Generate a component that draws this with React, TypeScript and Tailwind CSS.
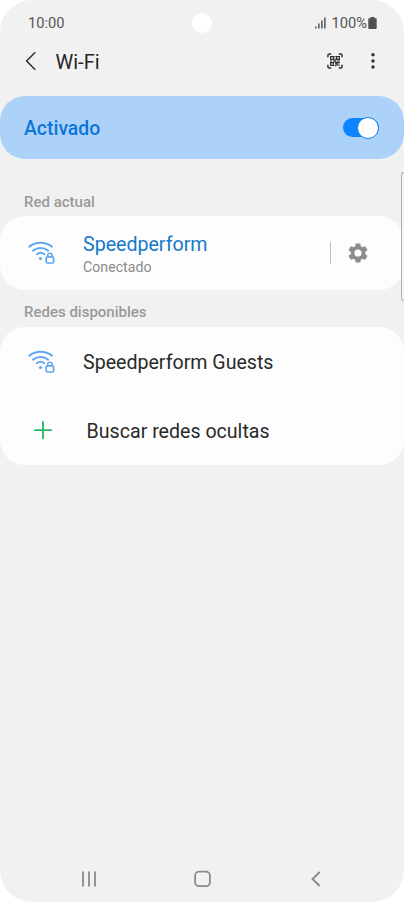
import React from 'react';

const WifiLock = () => (
  <svg className="w-7 h-6 shrink-0" viewBox="0 0 28 24" fill="none" stroke="#62a8f0" strokeWidth="2" strokeLinecap="round">
    <path d="M2.3 5.6C9 .4 18.2 .4 24.9 5.6" />
    <path d="M6.1 9.6C10.4 6.1 16.8 6.1 21.1 9.6" />
    <path d="M9.8 13.2C12 11.5 15.2 11.5 17.4 13.2" />
    <circle cx="13.5" cy="17.5" r="1.6" fill="#62a8f0" stroke="none" />
    <rect x="19.2" y="15.8" width="7.4" height="6.2" rx="1.2" strokeWidth="1.7" />
    <path d="M20.7 15.6v-1.2a2.2 2.2 0 0 1 4.4 0v1.2" strokeWidth="1.6" />
  </svg>
);

const ScanCode = () => (
  <svg className="w-4 h-4" viewBox="0 0 16 16" fill="none" stroke="#303030">
    <path d="M.9 4.2V2.6Q.9 1.1 2.4 1.1h1.8M11.8 1.1h1.8q1.5 0 1.5 1.5v1.6M15.1 11.8v1.6q0 1.5-1.5 1.5h-1.8M4.2 14.9H2.4Q.9 14.9.9 13.4v-1.6" strokeWidth="1.5" />
    <path d="M3.6 3.6h3v2.8h-3zM9.6 3.6h2.8v2.8H9.6zM3.6 9.6h2.8v2.8H3.6z" strokeWidth="1.2" />
    <path d="M8.1 3v1.3M8.1 5.4v2.2M3 8h2.2M6.2 8.1h3M10.2 8h2.8M7.8 9.6h2.6M11.2 9.5H13M8 11h4.2M7.8 12.6h1.4M10.2 8.6v4.2M11.6 12.5h1.2" strokeWidth="1.2" />
  </svg>
);

const Gear = () => (
  <svg className="w-6 h-6" viewBox="0 0 24 24" fill="#8c8c8c">
    <path d="M19.14 12.94c.04-.3.06-.61.06-.94 0-.32-.02-.64-.07-.94l2.03-1.58a.49.49 0 0 0 .12-.61l-1.92-3.32a.488.488 0 0 0-.59-.22l-2.39.96c-.5-.38-1.03-.7-1.62-.94l-.36-2.54a.484.484 0 0 0-.48-.41h-3.84c-.24 0-.43.17-.47.41l-.36 2.54c-.59.24-1.13.57-1.62.94l-2.39-.96c-.22-.08-.47 0-.59.22L2.74 8.87c-.12.21-.08.47.12.61l2.03 1.58c-.05.3-.09.63-.09.94s.02.64.07.94l-2.03 1.58a.49.49 0 0 0-.12.61l1.92 3.32c.12.22.37.29.59.22l2.39-.96c.5.38 1.03.7 1.62.94l.36 2.54c.05.24.24.41.48.41h3.84c.24 0 .44-.17.47-.41l.36-2.54c.59-.24 1.13-.56 1.62-.94l2.39.96c.22.08.47 0 .59-.22l1.92-3.32c.12-.22.07-.47-.12-.61l-2.01-1.58zM12 15.6A3.6 3.6 0 1 1 12 8.4a3.6 3.6 0 0 1 0 7.2z" />
  </svg>
);

const StatusBar = () => (
  <div className="relative h-[46px] shrink-0 flex items-center justify-between pl-7 pr-[26px] text-[14.7px] text-[#555]">
    <span className="pt-px leading-none">10:00</span>
    <span className="absolute left-[192px] top-[13px] w-5 h-5 rounded-full bg-white" />
    <div className="flex items-center">
      <svg className="w-[11px] h-3 mr-[5px]" viewBox="0 0 11 12" fill="#666">
        <rect x="0" y="9.5" width="1.7" height="2" />
        <rect x="3" y="6.5" width="1.7" height="5" />
        <rect x="6" y="3.5" width="1.7" height="8" />
        <rect x="9" y="0.5" width="1.7" height="11" />
      </svg>
      <span className="pt-px leading-none">100%</span>
      <svg className="w-[9px] h-3 ml-px mr-px" viewBox="0 0 9 12" fill="#505050">
        <path d="M2.5 0h4v1.3H8q.7 0 .7.7v9q0 .9-.9.9H1.2q-.9 0-.9-.9V2q0-.7.7-.7h1.5z" />
      </svg>
    </div>
  </div>
);

const Header = () => (
  <div className="h-[50px] shrink-0 flex items-start pl-6 pr-[25px]">
    <div className="flex items-center h-[30px] w-full">
      <svg className="w-3 h-5" viewBox="0 0 12 20" fill="none" stroke="#303030" strokeWidth="1.5" strokeLinecap="round">
        <path d="M10.8 1.8L2.6 10l8.2 8.2" />
      </svg>
      <h1 className="ml-[19.5px] pt-px text-[20px] leading-none text-[#252525]">Wi-Fi</h1>
      <div className="ml-auto flex items-center gap-6">
        <ScanCode />
        <svg className="w-[12px] h-4" viewBox="0 0 12 16" fill="#303030">
          <circle cx="6" cy="1.8" r="1.7" />
          <circle cx="6" cy="8" r="1.7" />
          <circle cx="6" cy="14" r="1.7" />
        </svg>
      </div>
    </div>
  </div>
);

const Toggle = () => (
  <div className="flex items-center justify-end w-9 h-[19px] rounded-full bg-[#0a84ff]">
    <span className="w-[22px] h-[22px] shrink-0 rounded-full bg-[#fdfdfd] border border-[#1582ec]" />
  </div>
);

const NavBar = () => (
  <div className="mt-auto h-[47px] shrink-0 flex items-center justify-between pl-[81px] pr-[80px]">
    <svg className="w-4 h-4" viewBox="0 0 16 16" stroke="#8a8a8a" strokeWidth="1.8">
      <path d="M2 .5v15M8 .5v15M14 .5v15" />
    </svg>
    <svg className="w-[18px] h-[18px]" viewBox="0 0 18 18" fill="none" stroke="#8a8a8a" strokeWidth="1.8">
      <rect x="1.1" y="1.6" width="14.8" height="14.6" rx="4" />
    </svg>
    <svg className="w-4 h-4" viewBox="0 0 16 16" fill="none" stroke="#8a8a8a" strokeWidth="1.9">
      <path d="M11.7 1L4.5 8l7.2 7" />
    </svg>
  </div>
);

export default function App() {
  return (
    <div className="w-[405px] h-[902px] bg-white overflow-hidden font-['Roboto',sans-serif]">
      <div className="relative w-[404px] h-[902px] flex flex-col rounded-[32px] bg-[#f1f1f1] overflow-hidden">
        <StatusBar />
        <Header />

        <div className="h-[63px] shrink-0 flex items-center justify-between pl-6 pr-[25px] rounded-[25px] bg-[#add2f9]">
          <span className="pt-[3px] text-[19.4px] font-medium text-[#0b76d9]">Activado</span>
          <Toggle />
        </div>

        <h2 className="mt-[33px] mb-[4px] pl-6 text-[15px] leading-5 font-medium text-[#999]">Red actual</h2>
        <div className="h-[74px] shrink-0 flex items-center pl-[27px] pr-[34px] rounded-[25px] bg-[#fdfdfd]">
          <WifiLock />
          <div className="ml-7 pt-[4px]">
            <div className="text-[19.6px] leading-6 text-[#1478cc]">Speedperform</div>
            <div className="text-[14.2px] leading-[21px] text-[#8c8c8c]">Conectado</div>
          </div>
          <div className="ml-auto flex items-center gap-[15px]">
            <span className="w-px h-[22px] bg-[#bbb]" />
            <Gear />
          </div>
        </div>

        <h2 className="mt-[12px] mb-[5px] pl-6 text-[15px] leading-5 font-medium text-[#999]">Redes disponibles</h2>
        <div className="h-[138px] shrink-0 flex flex-col rounded-[25px] bg-[#fdfdfd] text-[19.6px] text-[#2a2a2a]">
          <div className="h-[69px] flex items-center pl-[27px]">
            <WifiLock />
            <span className="ml-7 pt-[3px]">Speedperform Guests</span>
          </div>
          <div className="h-[69px] flex items-center pl-[34px]">
            <svg className="w-[18px] h-5" viewBox="0 0 18 20" stroke="#25b563" strokeWidth="1.8" strokeLinecap="round">
              <path d="M9 1v16.4M.9 9.2h16.2" />
            </svg>
            <span className="ml-[34.6px] pt-[3px]">Buscar redes ocultas</span>
          </div>
        </div>

        <NavBar />

        <span className="absolute right-0 top-[172px] w-[3px] h-[129px] rounded-l-[4px] border border-r-0 border-[#b0b0b0] bg-[#f5f5f5]" />
      </div>
    </div>
  );
}
